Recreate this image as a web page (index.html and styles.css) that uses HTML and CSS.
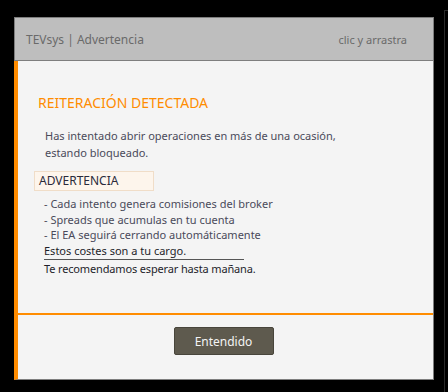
FILE: index.html
```html
<!DOCTYPE html>
<html lang="es">
<head>
<meta charset="utf-8">
<link rel="stylesheet" href="styles.css">
</head>
<body>
<div class="backwin"></div>
<div class="window">
  <div class="header">
    <span class="title">TEVsys | Advertencia</span>
    <span class="drag">clic y arrastra</span>
  </div>
  <div class="body">
    <div class="content">
      <h1 class="heading">REITERACIÓN DETECTADA</h1>
      <p class="intro">Has intentado abrir operaciones en más de una ocasión,<br>estando bloqueado.</p>
      <div class="warnbox">ADVERTENCIA</div>
      <ul class="list">
        <li>- Cada intento genera comisiones del broker</li>
        <li>- Spreads que acumulas en tu cuenta</li>
        <li>- El EA seguirá cerrando automáticamente</li>
      </ul>
      <p class="cost">Estos costes son a tu cargo.</p>
      <p class="advice">Te recomendamos esperar hasta mañana.</p>
    </div>
    <div class="footer">
      <button class="btn">Entendido</button>
    </div>
  </div>
</div>
</body>
</html>
```
FILE: styles.css
```css
html, body {
  margin: 0;
  padding: 0;
  background: #000;
  width: 448px;
  height: 392px;
  overflow: hidden;
  font-family: "Noto Sans", "Open Sans", sans-serif;
}
body {
  position: relative;
  padding-top: 17px;
  padding-left: 14px;
  box-sizing: border-box;
}
.backwin {
  position: absolute;
  left: 444px;
  top: 10px;
  width: 20px;
  height: 400px;
  border: 1px solid #2b2b2b;
  box-sizing: border-box;
}
.window {
  width: 420px;
  height: 363px;
  display: flex;
  flex-direction: column;
  box-sizing: border-box;
}
.header {
  height: 44px;
  box-sizing: border-box;
  background: #bebebe;
  border: 1px solid #7e7e7e;
  display: flex;
  align-items: center;
  justify-content: space-between;
  padding: 0 26px 0 11px;
}
.title {
  font-size: 12px;
  color: #6a6a6a;
}
.drag {
  font-size: 11px;
  color: #6a6a6a;
}
.body {
  flex: 1;
  display: flex;
  flex-direction: column;
  background: #f4f4f4;
  border-left: 4px solid #ff8c00;
  border-right: 1px solid #7e7e7e;
  border-bottom: 1px solid #7e7e7e;
}
.content {
  height: 254px;
  border-bottom: 2px solid #ff8c00;
  padding: 32px 0 0 20px;
  box-sizing: border-box;
}
.heading {
  margin: 0;
  font-size: 14px;
  font-weight: normal;
  color: #ff8c00;
  line-height: 20px;
}
.intro {
  margin: 14px 0 0 7px;
  font-size: 11px;
  line-height: 17px;
  color: #4a4a5a;
}
.warnbox {
  margin: 10px 0 0 -4px;
  width: 120px;
  height: 20px;
  box-sizing: border-box;
  background: #fdf5ec;
  border: 1px solid #f0ddc8;
  font-size: 12px;
  line-height: 18px;
  padding-left: 4px;
  color: #2a2a3a;
}
.list {
  list-style: none;
  margin: 5px 0 0 6px;
  padding: 0;
  font-size: 11px;
  line-height: 15.5px;
  color: #4a4a5a;
}
.cost {
  margin: 0 0 0 6px;
  width: 200px;
  border-bottom: 1px solid #555;
  font-size: 11px;
  line-height: 16px;
  color: #1e1e2a;
}
.advice {
  margin: 0 0 0 6px;
  font-size: 11px;
  line-height: 18px;
  letter-spacing: -0.15px;
  color: #1e1e2a;
}
.footer {
  flex: 1;
  display: flex;
  justify-content: center;
  align-items: flex-start;
  padding-top: 12px;
}
.btn {
  width: 100px;
  height: 28px;
  background: #5e5a4e;
  border: 1px solid #48453b;
  border-radius: 2px;
  color: #f4f4f4;
  font-family: "Noto Sans", "Open Sans", sans-serif;
  font-size: 12px;
  padding: 0;
  margin-left: -4px;
}
```
